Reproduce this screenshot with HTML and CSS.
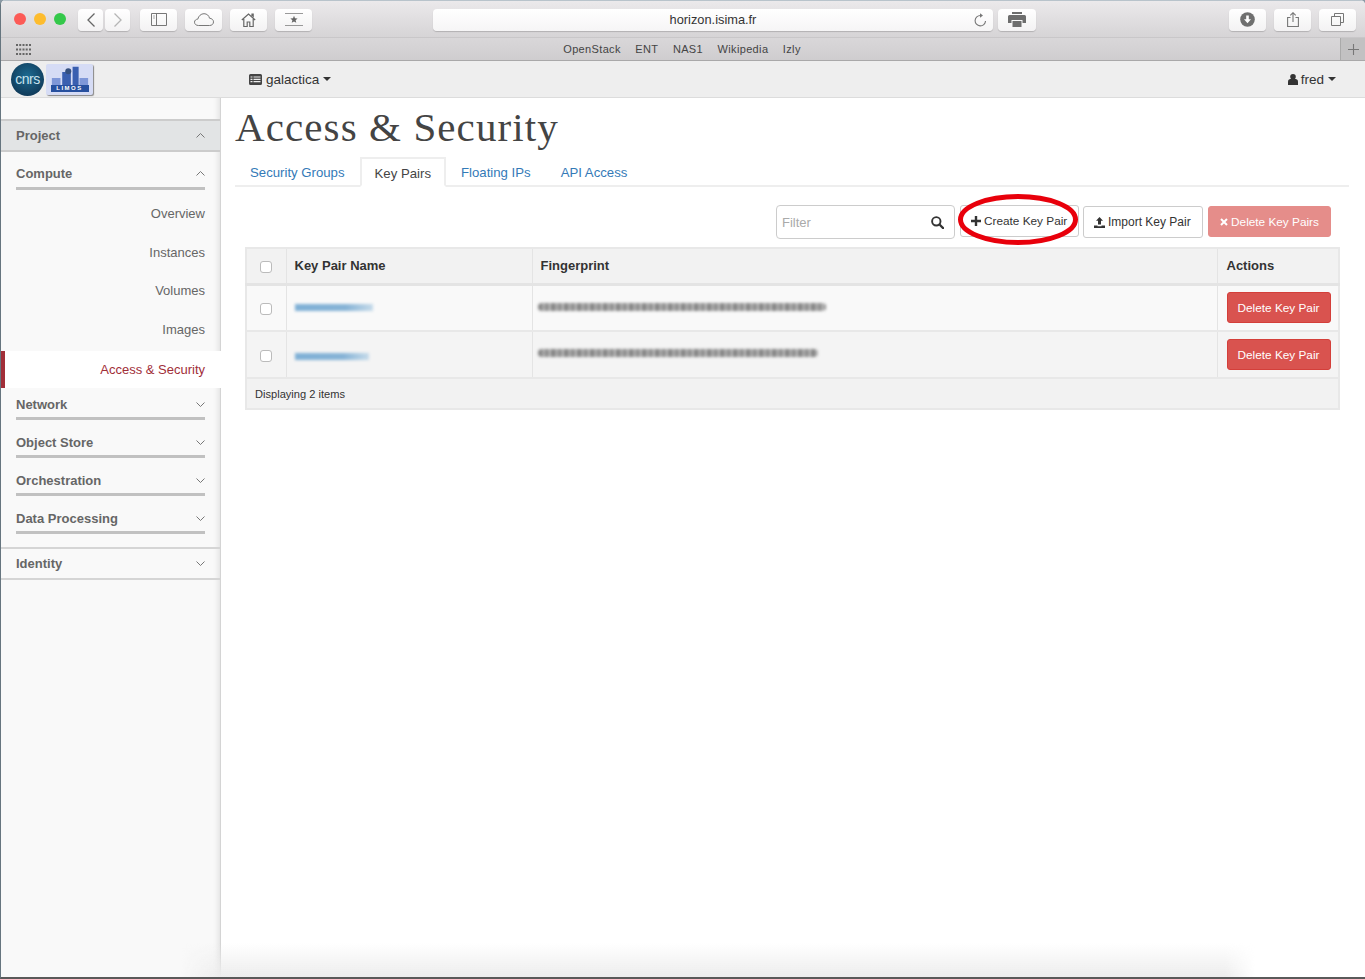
FILE: index.html
```html
<!DOCTYPE html>
<html lang="en">
<head>
<meta charset="utf-8">
<title>Access &amp; Security</title>
<link rel="stylesheet" href="styles.css">
</head>
<body>
<div class="window">
  <header class="toolbar">
    <div class="lights"><i class="light red"></i><i class="light amber"></i><i class="light green"></i></div>
    <div class="navpair">
      <button class="tb narrow"><svg width="12" height="16" viewBox="0 0 12 16"><path d="M9.5 1.5 3 8l6.500 6.500" fill="none" stroke="#666" stroke-width="1.300"/></svg></button>
      <button class="tb narrow"><svg width="12" height="16" viewBox="0 0 12 16"><path d="M2.500 1.500 9 8l-6.500 6.500" fill="none" stroke="#b5b5b5" stroke-width="1.300"/></svg></button>
    </div>
    <button class="tb"><svg width="16" height="13" viewBox="0 0 16 13"><path d="M.5.500h15v12H.500zM5.500.500v12" fill="none" stroke="#777"/><path d="M2 3h2M2 5h2" stroke="#aaa"/></svg></button>
    <button class="tb"><svg width="20" height="13" viewBox="0 0 20 13"><path d="M4.500 12.500C2 12.500.500 11 .500 9.200S2 6.200 3.800 6.100C4.500 3 7 .700 10 .700c3 0 5 2 5.500 4.500 2.300.2 4 1.700 4 3.700s-1.500 3.600-4 3.600z" fill="none" stroke="#777"/></svg></button>
    <button class="tb"><svg width="15" height="14" viewBox="0 0 15 14"><path d="M.8 7 7.500 1l6.700 6M2.800 6v7.500h3.400V9h2.600v4.500h3.400V6M11 3V1.200h1.200V4.200" fill="none" stroke="#666" stroke-width="1.200"/></svg></button>
    <button class="tb"><svg width="18" height="13" viewBox="0 0 18 13"><path d="M0 .500h18M0 12.500h18" stroke="#999"/><path d="m9 2.800 1 2.500 2.600.2-2 1.700.7 2.600L9 8.400l-2.300 1.400.7-2.600-2-1.700L8 5.300z" fill="#666"/></svg></button>
    <div class="address"><span>horizon.isima.fr</span><svg class="reload" width="13" height="14" viewBox="0 0 13 14"><path d="M7.500 2.500a5.200 5.200 0 1 0 5 5.500" fill="none" stroke="#777" stroke-width="1.100"/><path d="M7 .200v4.600l3-2.300z" fill="#777"/></svg></div>
    <button class="tb print"><svg width="18" height="15" viewBox="0 0 18 15"><path d="M4 0h10v2H4zM1.500 3h15A1.500 1.500 0 0 1 18 4.500V11h-3.500V8h-11v3H0V4.500A1.500 1.500 0 0 1 1.500 3zM4.500 9h9v6h-9z" fill="#6d6d6d"/></svg></button>
    <div class="tb-right">
      <button class="tb"><svg width="15" height="15" viewBox="0 0 15 15"><circle cx="7.500" cy="7.500" r="7.300" fill="#6f6f6f"/><path d="M6.200 3.500h2.600v3.700H11l-3.500 4-3.500-4h2.200z" fill="#fff"/></svg></button>
      <button class="tb"><svg width="12" height="15" viewBox="0 0 12 15"><path d="M3.500 5.500H.6v9h10.800v-9H8.500M6 10V.8M3.300 3.300 6 .7l2.700 2.600" fill="none" stroke="#777" stroke-width="1.100"/></svg></button>
      <button class="tb"><svg width="13" height="13" viewBox="0 0 13 13"><path d="M.5 3.500h9v9h-9zM3.500 3.500v-3h9v9h-3" fill="none" stroke="#777"/></svg></button>
    </div>
  </header>

  <div class="bookmarks">
    <svg class="grid-icon" width="15" height="11" viewBox="0 0 15 11"><g fill="#666"><rect width="2" height="2"/><rect x="3.200" width="2" height="2"/><rect x="6.500" width="2" height="2"/><rect x="9.700" width="2" height="2"/><rect x="13" width="2" height="2"/><rect y="4.500" width="2" height="2"/><rect x="3.200" y="4.500" width="2" height="2"/><rect x="6.500" y="4.500" width="2" height="2"/><rect x="9.700" y="4.500" width="2" height="2"/><rect x="13" y="4.500" width="2" height="2"/><rect y="9" width="2" height="2"/><rect x="3.200" y="9" width="2" height="2"/><rect x="6.500" y="9" width="2" height="2"/><rect x="9.700" y="9" width="2" height="2"/><rect x="13" y="9" width="2" height="2"/></g></svg>
    <nav class="bm-links"><span>OpenStack</span><span>ENT</span><span>NAS1</span><span>Wikipedia</span><span>Izly</span></nav>
    <div class="newtab"><svg width="11" height="11" viewBox="0 0 11 11"><path d="M5.500 0v11M0 5.500h11" stroke="#777" stroke-width="1.100"/></svg></div>
  </div>

  <div class="navbar">
    <div class="logos">
      <div class="cnrs"><span>cnrs</span></div>
      <div class="limos">
        <svg width="44" height="22" viewBox="0 0 44 22"><path d="M1 14h10v8H1zM33 14h10v8H33z" fill="#7f97d8"/><path d="M13 7h10v15H13zM25 1h7v21h-7z" fill="#3a5fb0"/><circle cx="20" cy="6" r="3.500" fill="#35507f"/></svg>
        <span>LIMOS</span>
      </div>
    </div>
    <div class="project-pick">
      <svg class="fa" width="13" height="11" viewBox="0 0 13 11"><path d="M1.500 0h10A1.500 1.500 0 0 1 13 1.500v8a1.500 1.500 0 0 1-1.500 1.500h-10A1.500 1.500 0 0 1 0 9.500v-8A1.500 1.500 0 0 1 1.500 0z" fill="#444"/><path d="M1.500 3h2M4.500 3h7M1.500 5.300h2M4.500 5.300h7M1.500 7.600h2M4.500 7.600h7" stroke="#eee" stroke-width="1.200"/></svg>
      <span>galactica</span><i class="caret"></i>
    </div>
    <div class="user-pick">
      <svg class="fa" width="10" height="11" viewBox="0 0 10 11"><circle cx="5" cy="2.800" r="2.800" fill="#333"/><path d="M0 11V8c0-2 1-2.900 2.500-2.900h5C9 5.100 10 6 10 8v3z" fill="#333"/></svg>
      <span>fred</span><i class="caret"></i>
    </div>
  </div>

  <div class="body">
    <aside class="sidebar">
      <div class="dash"><span>Project</span><svg class="chev" width="9" height="5" viewBox="0 0 9 5"><path d="m.5 4.500 4-4 4 4" fill="none" stroke="#777"/></svg></div>
      <div class="panel first"><div class="panel-head"><span>Compute</span><svg class="chev" width="9" height="5" viewBox="0 0 9 5"><path d="m.5 4.500 4-4 4 4" fill="none" stroke="#777"/></svg></div></div>
      <ul class="links">
        <li>Overview</li>
        <li>Instances</li>
        <li>Volumes</li>
        <li>Images</li>
      </ul>
      <div class="active-link">Access &amp; Security</div>
      <div class="panel tight"><div class="panel-head"><span>Network</span><svg class="chev" width="9" height="5" viewBox="0 0 9 5"><path d="m.5.500 4 4 4-4" fill="none" stroke="#777"/></svg></div></div>
      <div class="panel"><div class="panel-head"><span>Object Store</span><svg class="chev" width="9" height="5" viewBox="0 0 9 5"><path d="m.5.500 4 4 4-4" fill="none" stroke="#777"/></svg></div></div>
      <div class="panel"><div class="panel-head"><span>Orchestration</span><svg class="chev" width="9" height="5" viewBox="0 0 9 5"><path d="m.5.500 4 4 4-4" fill="none" stroke="#777"/></svg></div></div>
      <div class="panel"><div class="panel-head"><span>Data Processing</span><svg class="chev" width="9" height="5" viewBox="0 0 9 5"><path d="m.5.500 4 4 4-4" fill="none" stroke="#777"/></svg></div></div>
      <div class="dash-plain"><span>Identity</span><svg class="chev" width="9" height="5" viewBox="0 0 9 5"><path d="m.5.500 4 4 4-4" fill="none" stroke="#777"/></svg></div>
    </aside>

    <main class="content">
      <h1 class="title">Access &amp; Security</h1>
      <ul class="tabs">
        <li>Security Groups</li>
        <li class="on">Key Pairs</li>
        <li>Floating IPs</li>
        <li>API Access</li>
      </ul>
      <div class="actions">
        <div class="filter"><span>Filter</span><svg width="13" height="13" viewBox="0 0 13 13"><circle cx="5.300" cy="5.300" r="4.200" fill="none" stroke="#333" stroke-width="1.900"/><path d="m8.500 8.500 3.600 3.600" stroke="#333" stroke-width="2.200" stroke-linecap="round"/></svg></div>
        <div class="btn-wrap">
          <button class="btn default create"><svg width="10" height="10" viewBox="0 0 10 10"><path d="M5 0v10M0 5h10" stroke="#333" stroke-width="2.400"/></svg>Create Key Pair</button>
          <svg class="ring" width="130" height="60" viewBox="0 0 130 60"><ellipse cx="63" cy="28.500" rx="57.500" ry="23" fill="none" stroke="#e8000b" stroke-width="5"/></svg>
        </div>
        <button class="btn default import"><svg width="11" height="11" viewBox="0 0 11 11"><path d="M5.500 0 9 3.800H7V7.500H4V3.800H2zM0 8.500h3.500v.7h4v-.7H11V11H0z" fill="#333"/></svg>Import Key Pair</button>
        <button class="btn danger muted"><svg width="8" height="8" viewBox="0 0 8 8"><path d="m1 1 6 6M7 1 1 7" stroke="#fff" stroke-width="2"/></svg>Delete Key Pairs</button>
      </div>
      <table class="grid">
        <thead>
          <tr><th class="c-check"><i class="check"></i></th><th class="c-name">Key Pair Name</th><th class="c-fp">Fingerprint</th><th class="c-act">Actions</th></tr>
        </thead>
        <tbody>
          <tr>
            <td class="c-check"><i class="check"></i></td>
            <td><div class="smear blue one"></div></td>
            <td><div class="smear grey wide"></div></td>
            <td class="c-act"><button class="btn danger">Delete Key Pair</button></td>
          </tr>
          <tr>
            <td class="c-check"><i class="check"></i></td>
            <td><div class="smear blue two"></div></td>
            <td><div class="smear grey narrow"></div></td>
            <td class="c-act"><button class="btn danger">Delete Key Pair</button></td>
          </tr>
        </tbody>
        <tfoot><tr><td colspan="4">Displaying 2 items</td></tr></tfoot>
      </table>
    </main>
    <div class="fade"></div>
  </div>
</div>
</body>
</html>
```

FILE: styles.css
```css
* { box-sizing: border-box; }
html, body { margin: 0; height: 100%; }
body { background: #8b9aa6; font-family: "Liberation Sans", Arial, sans-serif; color: #333; overflow: hidden; }
ul { list-style: none; margin: 0; padding: 0; }
button { font-family: inherit; margin: 0; cursor: default; }

.window { height: 979px; width: 1365px; display: flex; flex-direction: column; background: #fff; border-left: 1px solid #66757f; border-top-left-radius: 5px; border-top-right-radius: 5px; overflow: hidden; border-bottom: 2px solid #5a5a5a; }

.toolbar { height: 38px; flex: none; display: flex; align-items: center; padding: 1px 0 0 12px; background: linear-gradient(#ebe9eb, #d6d4d6); border-bottom: 1px solid #c9c7c9; border-top: 1px solid #b8c3cb; }
.lights { display: flex; gap: 8px; width: 52px; margin: -1px 12px 0 1px; }
.light { width: 12px; height: 12px; border-radius: 50%; display: block; }
.red { background: #fc5b57; }
.amber { background: #fdbc2e; }
.green { background: #34c84a; }
.navpair { display: flex; gap: 2px; margin-right: 10px; }
.tb { width: 37px; height: 22px; padding: 0; border: 0; border-radius: 4px; background: linear-gradient(#fff, #f3f2f3); box-shadow: 0 1px 1px rgba(0,0,0,.18); display: flex; align-items: center; justify-content: center; margin-right: 8px; }
.navpair .tb { margin: 0; }
.tb.narrow { width: 25px; }
.address { width: 560px; height: 22px; margin-left: 113px; border-radius: 4px; background: linear-gradient(#fff, #f6f5f6); box-shadow: 0 1px 1px rgba(0,0,0,.18); display: flex; align-items: center; justify-content: center; font-size: 12.800px; color: #333; position: relative; }
.reload { position: absolute; right: 7px; top: 4px; }
.print { width: 38px; margin-left: 5px; margin-right: 0; }
.tb-right { display: flex; margin-left: 193px; }
.tb-right .tb { margin-right: 8px; }

.bookmarks { height: 23px; flex: none; display: flex; align-items: center; padding-left: 15px; background: linear-gradient(#d9d7d9, #cfcdcf); border-bottom: 1px solid #a9a8a9; font-size: 11px; color: #444; }
.grid-icon { flex: none; }
.bm-links { flex: 1; display: flex; justify-content: center; gap: 14.500px; margin-right: 7px; letter-spacing: .35px; }
.newtab { width: 25px; height: 22px; background: #c2c1c2; border-left: 1px solid #aaa; display: flex; align-items: center; justify-content: center; }

.navbar { height: 37px; flex: none; display: flex; align-items: center; background: #eeeeee; border-bottom: 1px solid #dcdcdc; font-size: 13.500px; color: #333; padding-left: 10px; }
.logos { display: flex; align-items: center; width: 238px; }
.cnrs { width: 33px; height: 33px; border-radius: 50%; background: radial-gradient(circle at 50% 40%, #1d6b91, #0c2c49); display: flex; align-items: center; justify-content: center; color: #c8e3ee; font-size: 14px; letter-spacing: -.5px; }
.limos { width: 47px; height: 31px; margin-left: 2px; background: #d6dcf5; border-radius: 2px; box-shadow: 1px 1px 1px #888; position: relative; display: flex; flex-direction: column; align-items: center; overflow: hidden; padding-top: 2px; }
.limos svg { flex: none; width: 38px; height: 19px; }
.limos span { width: 38px; height: 7px; background: #27509f; color: #fff; font-size: 6px; line-height: 7px; font-weight: bold; text-align: center; letter-spacing: 1.500px; }
.project-pick { display: flex; align-items: center; }
.project-pick .fa { margin-right: 4px; }
.user-pick { display: flex; align-items: center; margin-left: auto; margin-right: 29px; }
.user-pick .fa { margin-right: 3px; }
.caret { display: block; width: 0; height: 0; border: 4px solid transparent; border-top-color: #333; border-bottom-width: 0; margin-left: 4px; }

.body { flex: 1; display: flex; min-height: 0; position: relative; }
.sidebar { width: 220px; flex: none; background: #f9f9f9; padding-top: 21px; border-right: 1px solid #d4d4d4; box-shadow: inset -7px 0 6px -6px rgba(0,0,0,.12); font-size: 13px; color: #666; }
.chev { flex: none; }
.dash { height: 33px; padding: 0 15px; background: #e2e4e5; border-top: 2px solid #ccc; border-bottom: 2px solid #ccc; display: flex; align-items: center; justify-content: space-between; font-weight: bold; }
.panel { height: 38px; display: flex; flex-direction: column; justify-content: flex-end; padding: 0 15px; font-weight: bold; }
.panel.tight { height: 32px; }
.panel-head { height: 25px; line-height: 20px; border-bottom: 3px solid #c1c1c1; display: flex; justify-content: space-between; align-items: flex-start; }
.first .panel-head { height: 26px; }
.panel-head .chev { margin-top: 7px; }
.links { margin-top: 4px; }
.links li { height: 38.700px; padding: 0 15px; display: flex; align-items: center; justify-content: flex-end; }
.active-link { height: 37px; margin-top: 2px; margin-right: -1px; background: #fff; border-left: 4px solid #a12e38; color: #a12e38; display: flex; align-items: center; justify-content: flex-end; padding-right: 16px; position: relative; }
.dash-plain { height: 33px; margin-top: 13px; padding: 0 15px; border-top: 2px solid #d5d5d5; border-bottom: 2px solid #d5d5d5; display: flex; align-items: center; justify-content: space-between; font-weight: bold; }

.content { flex: 1; padding: 0 16px 0 14px; min-width: 0; }
.title { margin: 0; height: 59px; font-family: "Liberation Serif", serif; font-weight: normal; font-size: 41px; line-height: 59px; color: #444; letter-spacing: 1.100px; }
.tabs { display: flex; height: 30px; border-bottom: 2px solid #eee; font-size: 13.200px; color: #337ab7; }
.tabs li { padding: 0 15px; line-height: 31px; height: 30px; }
.tabs .on { color: #444; background: #fff; border: 2px solid #eee; border-bottom-color: #fff; padding: 0 13px; line-height: 29px; }

.actions { display: flex; justify-content: flex-end; align-items: flex-start; margin-top: 18px; padding-right: 18px; height: 42px; }
.filter { width: 179px; height: 34px; margin-right: 5px; border: 1px solid #ccc; border-radius: 4px; display: flex; align-items: center; justify-content: space-between; padding: 0 10px 0 5px; font-size: 13px; color: #aaa; }
.btn-wrap { position: relative; margin-right: 4px; }
.ring { position: absolute; left: -5px; top: -14px; pointer-events: none; }
.btn { height: 32px; padding: 0 10px; font-size: 11.800px; border-radius: 3px; border: 1px solid transparent; display: inline-flex; align-items: center; gap: 3px; white-space: nowrap; }
.default { background: #fff; border-color: #ccc; color: #333; }
.create { width: 119px; height: 32px; padding: 0 10px; }
.import { width: 120px; margin-right: 5px; margin-top: 1px; padding: 0 10px; font-size: 12px; }
.danger { background: #d9534f; border-color: #d43f3a; color: #fff; width: 104px; justify-content: center; height: 31px; padding: 0; }
.muted { width: 123px; background: #e58d8a; border-color: #e58d8a; margin-top: 1px; }

.grid { width: 1095px; margin-left: 10px; border-collapse: collapse; table-layout: fixed; font-size: 13px; border: 2px solid #e8e8e8; }
.grid th { background: #f2f2f2; height: 36px; text-align: left; font-weight: bold; padding: 0 8px; border-right: 1px solid #e4e4e4; border-bottom: 3px solid #e4e4e4; color: #333; }
.grid td { height: 47px; padding: 0 8px; background: #f9f9f9; border-right: 1px solid #e4e4e4; border-bottom: 2px solid #e8e8e8; }
.grid tbody tr:nth-child(2) td { background: #f4f4f4; }
.grid tfoot td { height: 31px; background: #f2f2f2; font-size: 11.100px; border-right: 0; border-bottom: 0; }
.grid .c-check { width: 40px; text-align: center; padding: 0; }
.c-name { width: 246px; }
.grid .c-act { width: 122px; padding-left: 9px; }
.check { display: inline-block; width: 12px; height: 12px; border: 1px solid #bbb; border-radius: 3px; background: #fff; vertical-align: middle; }

.smear { height: 7px; filter: blur(1.600px); margin-top: -1px; }
.blue { background: linear-gradient(90deg, #7fb0d6 0, #86b3d6 65%, #c6dbea 100%); width: 78px; }
.blue.two { width: 74px; margin-top: 3px; }
.grey { background: repeating-linear-gradient(90deg, #666 0 4px, #999 4px 7px, #777 7px 11px, #b5b5b5 11px 13px), linear-gradient(#999, #777); height: 8px; margin-left: -3px; opacity: .8; border-radius: 4px; }
.wide { width: 288px; }
.narrow { width: 280px; margin-top: -3px; }

.fade { position: absolute; left: 180px; right: 110px; bottom: 0; height: 34px; background: linear-gradient(rgba(238,238,238,0), #ededed); -webkit-mask-image: linear-gradient(90deg, transparent, #000 40px, #000 calc(100% - 30px), transparent); mask-image: linear-gradient(90deg, transparent, #000 40px, #000 calc(100% - 30px), transparent); pointer-events: none; }
```
